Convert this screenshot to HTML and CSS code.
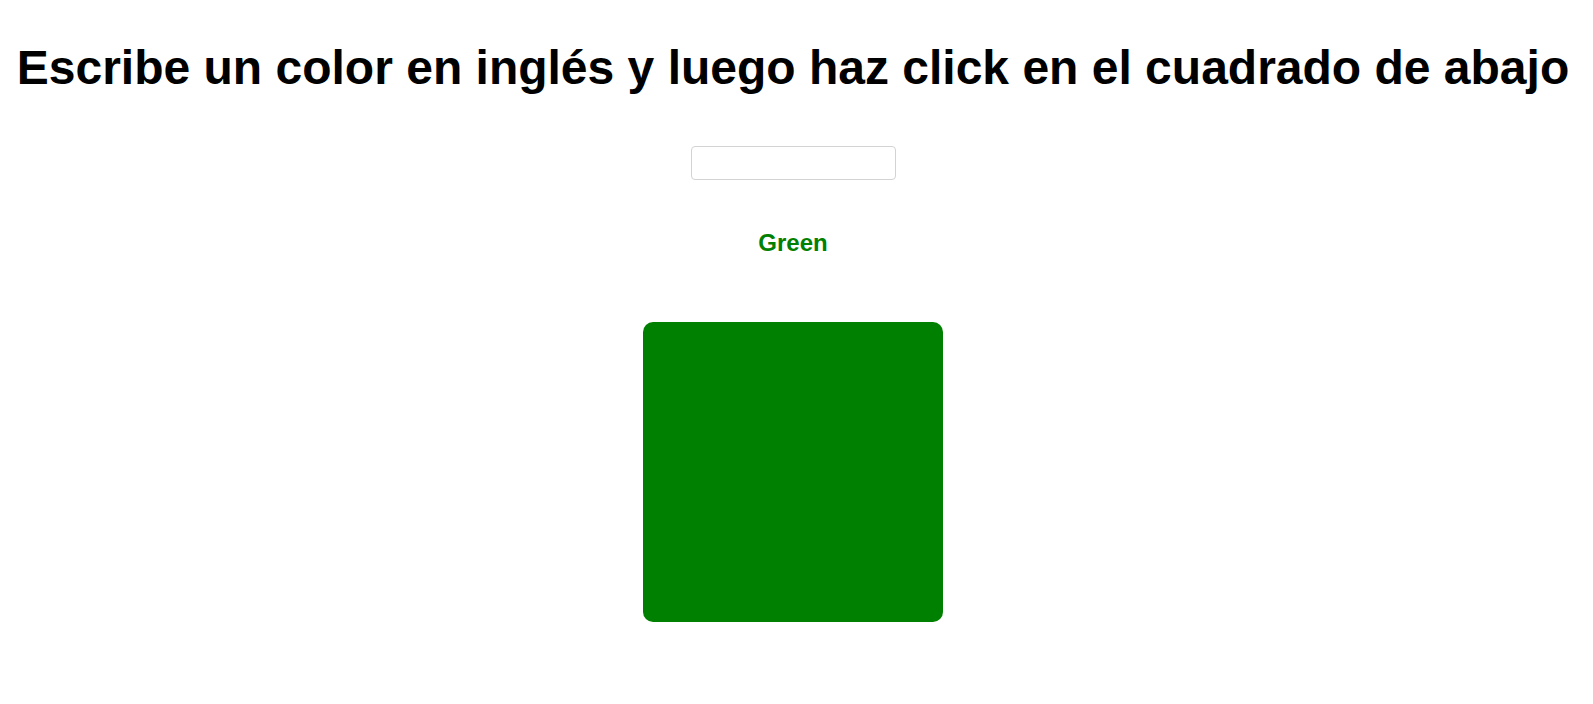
FILE: index.html
```html
<!DOCTYPE html>
<html lang="es">
<head>
<meta charset="utf-8">
<title>Colores</title>
<link rel="stylesheet" href="styles.css">
</head>
<body>
<main class="page">
  <h1 class="title">Escribe un color en inglés y luego haz click en el cuadrado de abajo</h1>
  <input class="color-input" type="text">
  <p class="color-name">Green</p>
  <div class="square"></div>
</main>
</body>
</html>
```

FILE: styles.css
```css
html, body {
  margin: 0;
  padding: 0;
  background: #ffffff;
}

.page {
  display: flex;
  flex-direction: column;
  align-items: center;
  padding: 0 7px 0 0;
  font-family: "Liberation Sans", Arial, sans-serif;
}

.title {
  margin: 40px 0 0;
  font-size: 48px;
  font-weight: bold;
  color: #000;
  text-align: center;
  white-space: nowrap;
}

.color-input {
  margin-top: 51px;
  width: 205px;
  height: 34px;
  box-sizing: border-box;
  border: 1px solid #d3d3d3;
  border-radius: 4px;
  padding: 4px 8px;
  font-family: inherit;
  font-size: 16px;
  outline: none;
}

.color-name {
  margin: 49px 0 0;
  font-size: 24px;
  font-weight: bold;
  color: #008000;
}

.square {
  margin-top: 65px;
  width: 300px;
  height: 300px;
  border-radius: 10px;
  background: #008000;
}
```
